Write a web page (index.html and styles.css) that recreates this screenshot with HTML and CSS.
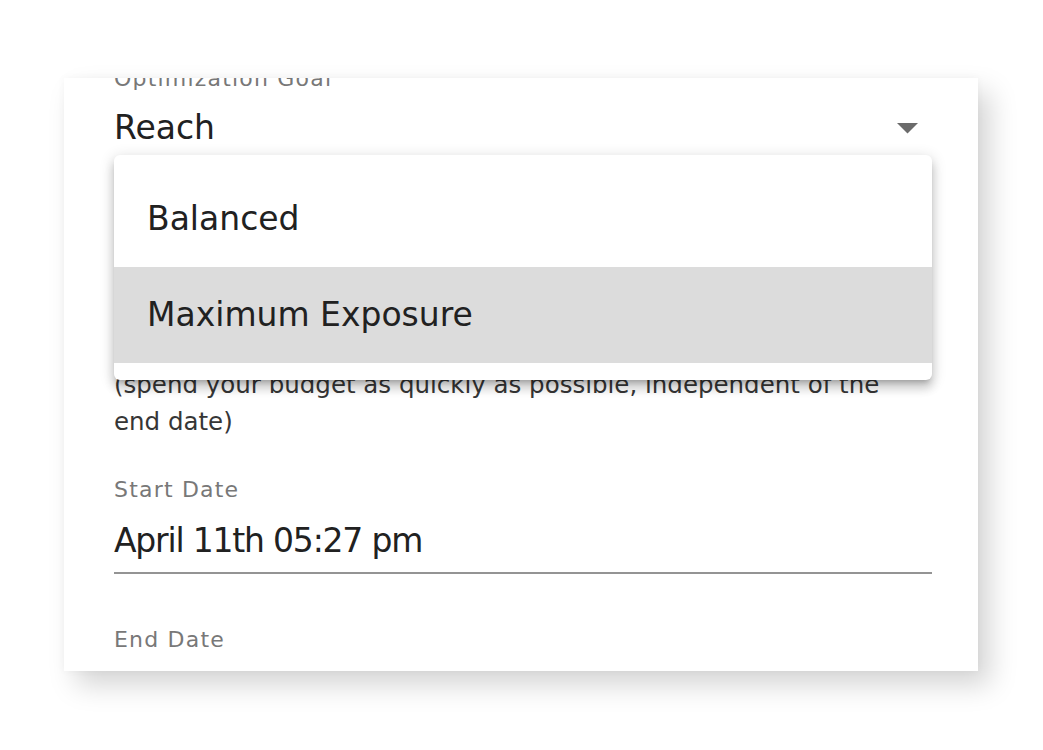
FILE: index.html
```html
<!DOCTYPE html>
<html lang="en">
<head>
<meta charset="utf-8">
<title>Campaign settings</title>
<link rel="stylesheet" href="styles.css">
</head>
<body>
  <div class="card">
    <div class="content">
      <div class="field field-select">
        <div class="label">Optimization Goal</div>
        <div class="select-row">
          <span class="value">Reach</span>
          <svg class="arrow" width="21" height="11" viewBox="0 0 21 11"><path d="M0 0 L21 0 L10.5 10.5 Z" fill="#6b6b6b"/></svg>
        </div>
      </div>
      <p class="helper">(spend your budget as quickly as possible, independent of the end date)</p>
      <div class="field field-date">
        <div class="label">Start Date</div>
        <div class="value value-date">April 11th 05:27 pm</div>
        <div class="underline"></div>
      </div>
      <div class="field field-end">
        <div class="label">End Date</div>
      </div>
    </div>
    <ul class="menu">
      <li class="menu-item">Balanced</li>
      <li class="menu-item selected">Maximum Exposure</li>
    </ul>
  </div>
</body>
</html>
```
FILE: styles.css
```css
html, body {
  margin: 0;
  padding: 0;
  background: #ffffff;
}
body {
  font-family: "DejaVu Sans", "Noto Sans", sans-serif;
  box-sizing: border-box;
  min-height: 750px;
  padding-top: 78px;
  padding-left: 64px;
}
.card {
  position: relative;
  display: flex;
  flex-direction: column;
  width: 914px;
  height: 593px;
  background: #ffffff;
  overflow: hidden;
  box-sizing: border-box;
  padding: 0 46px 0 50px;
  box-shadow: 12px 14px 26px rgba(0, 0, 0, 0.17), 0 0 8px rgba(0, 0, 0, 0.04);
}
.content {
  margin-top: -14px;
  display: flex;
  flex-direction: column;
  flex-shrink: 0;
}
.label {
  font-size: 22px;
  line-height: 30px;
  color: #787878;
  letter-spacing: 1.2px;
}
.value {
  font-size: 33px;
  line-height: 44px;
  color: #212121;
}
.value-date { letter-spacing: -1.2px; }
.field-select .label { margin-bottom: 12px; }
.select-row {
  display: flex;
  align-items: center;
  justify-content: space-between;
}
.arrow { margin-right: 14px; }
.helper {
  margin: 216px 0 0 0;
  max-width: 790px;
  font-size: 24.5px;
  line-height: 37px;
  color: #363636;
}
.field-date { margin-top: 35px; }
.field-date .label { margin-bottom: 14px; }
.underline {
  margin-top: 9px;
  height: 2px;
  background: #949494;
}
.field-end { margin-top: 51px; }
.menu {
  position: absolute;
  left: 50px;
  top: 77px;
  width: 818px;
  margin: 0;
  padding: 16px 0 17px;
  list-style: none;
  background: #ffffff;
  border-radius: 6px;
  box-shadow: 0 5px 5px -3px rgba(0,0,0,0.2), 0 8px 10px 1px rgba(0,0,0,0.14), 0 3px 14px 2px rgba(0,0,0,0.12);
}
.menu-item {
  height: 96px;
  line-height: 96px;
  padding-left: 33px;
  font-size: 33px;
  color: #212121;
}
.menu-item.selected { background: #dcdcdc; }
```
